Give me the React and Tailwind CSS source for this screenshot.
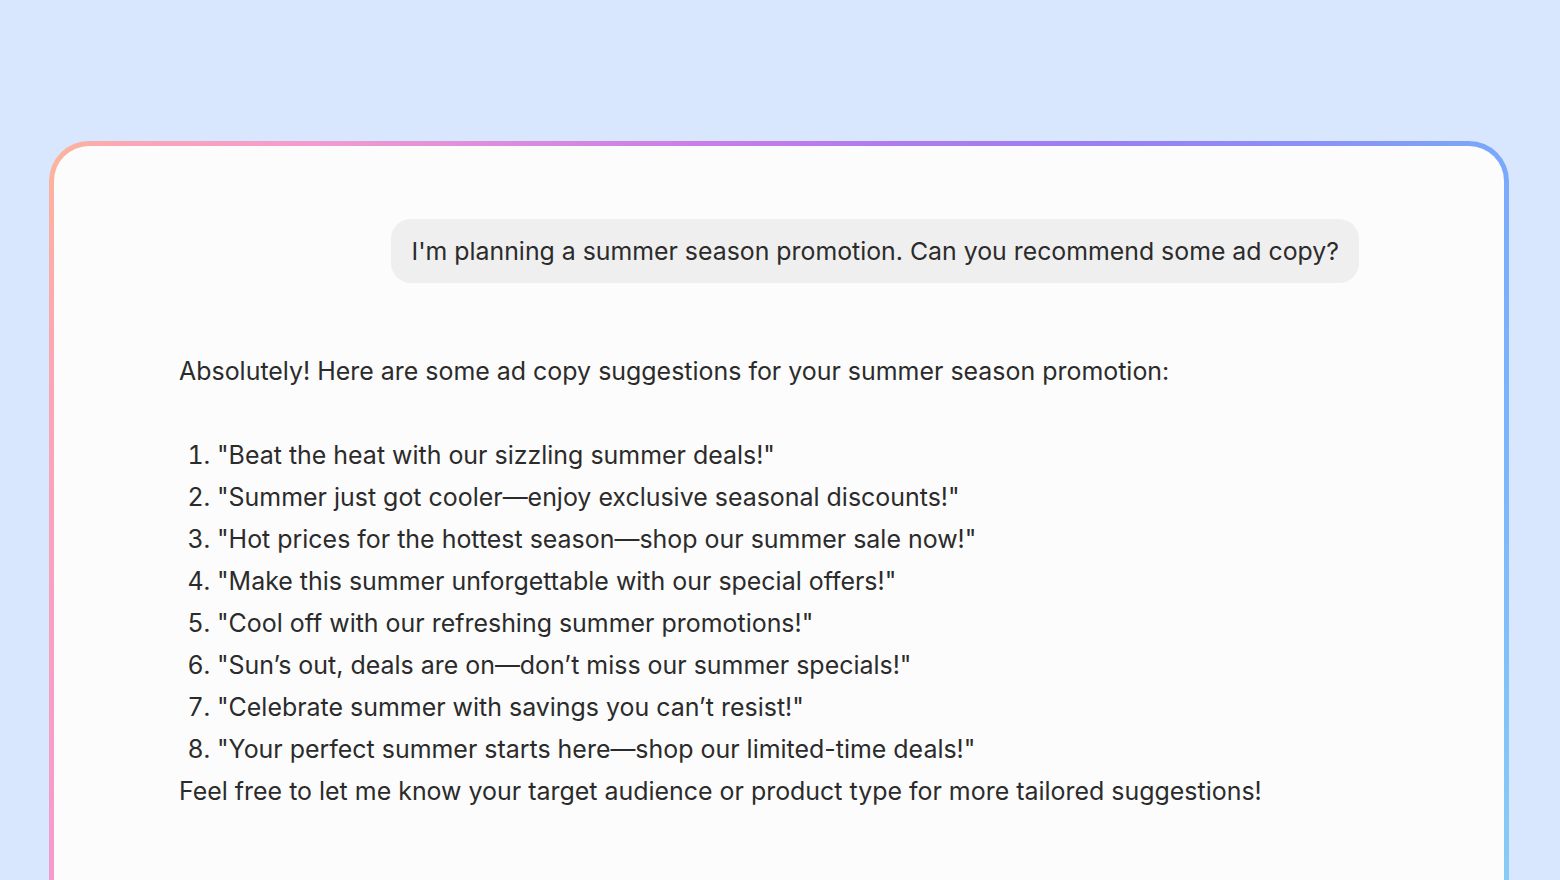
export default function App() {
  const items = [
    '"Beat the heat with our sizzling summer deals!"',
    '"Summer just got cooler\u2014enjoy exclusive seasonal discounts!"',
    '"Hot prices for the hottest season\u2014shop our summer sale now!"',
    '"Make this summer unforgettable with our special offers!"',
    '"Cool off with our refreshing summer promotions!"',
    '"Sun\u2019s out, deals are on\u2014don\u2019t miss our summer specials!"',
    '"Celebrate summer with savings you can\u2019t resist!"',
    '"Your perfect summer starts here\u2014shop our limited-time deals!"',
  ];
  return (
    <div className="w-full h-[880px] overflow-hidden bg-[#d8e6fe] pt-[141px] pl-[49px] pr-[51px] font-['Inter',sans-serif] text-[#2b2b2b]">
      <div className="h-[800px] rounded-[40px] p-[5px] bg-[linear-gradient(108.7deg,#fdb59a_0%,#f8a7b7_5%,#f29ccf_15%,#d98ae0_28%,#c97de8_38%,#b07af0_49%,#9b7ff2_61%,#8c8ff6_72%,#7aa8fc_84%,#7ab4fc_90%,#88d0f5_100%)]">
        <div className="h-full rounded-[35px] bg-[#fcfcfc] pt-[73px] pl-[125px] pr-[145px]">
          <div className="flex justify-end">
            <div className="rounded-[20px] bg-[#efefef] px-5 py-[11px] text-[24.85px] leading-[42px]">
              I'm planning a summer season promotion. Can you recommend some ad copy?
            </div>
          </div>
          <div className="mt-[67px] text-[24.95px] leading-[42px]">
            <p>Absolutely! Here are some ad copy suggestions for your summer season promotion:</p>
            <ol className="mt-[42px] list-decimal pl-[38px]">
              {items.map((t, i) => (
                <li key={i}>{t}</li>
              ))}
            </ol>
            <p>Feel free to let me know your target audience or product type for more tailored suggestions!</p>
          </div>
        </div>
      </div>
    </div>
  );
}
